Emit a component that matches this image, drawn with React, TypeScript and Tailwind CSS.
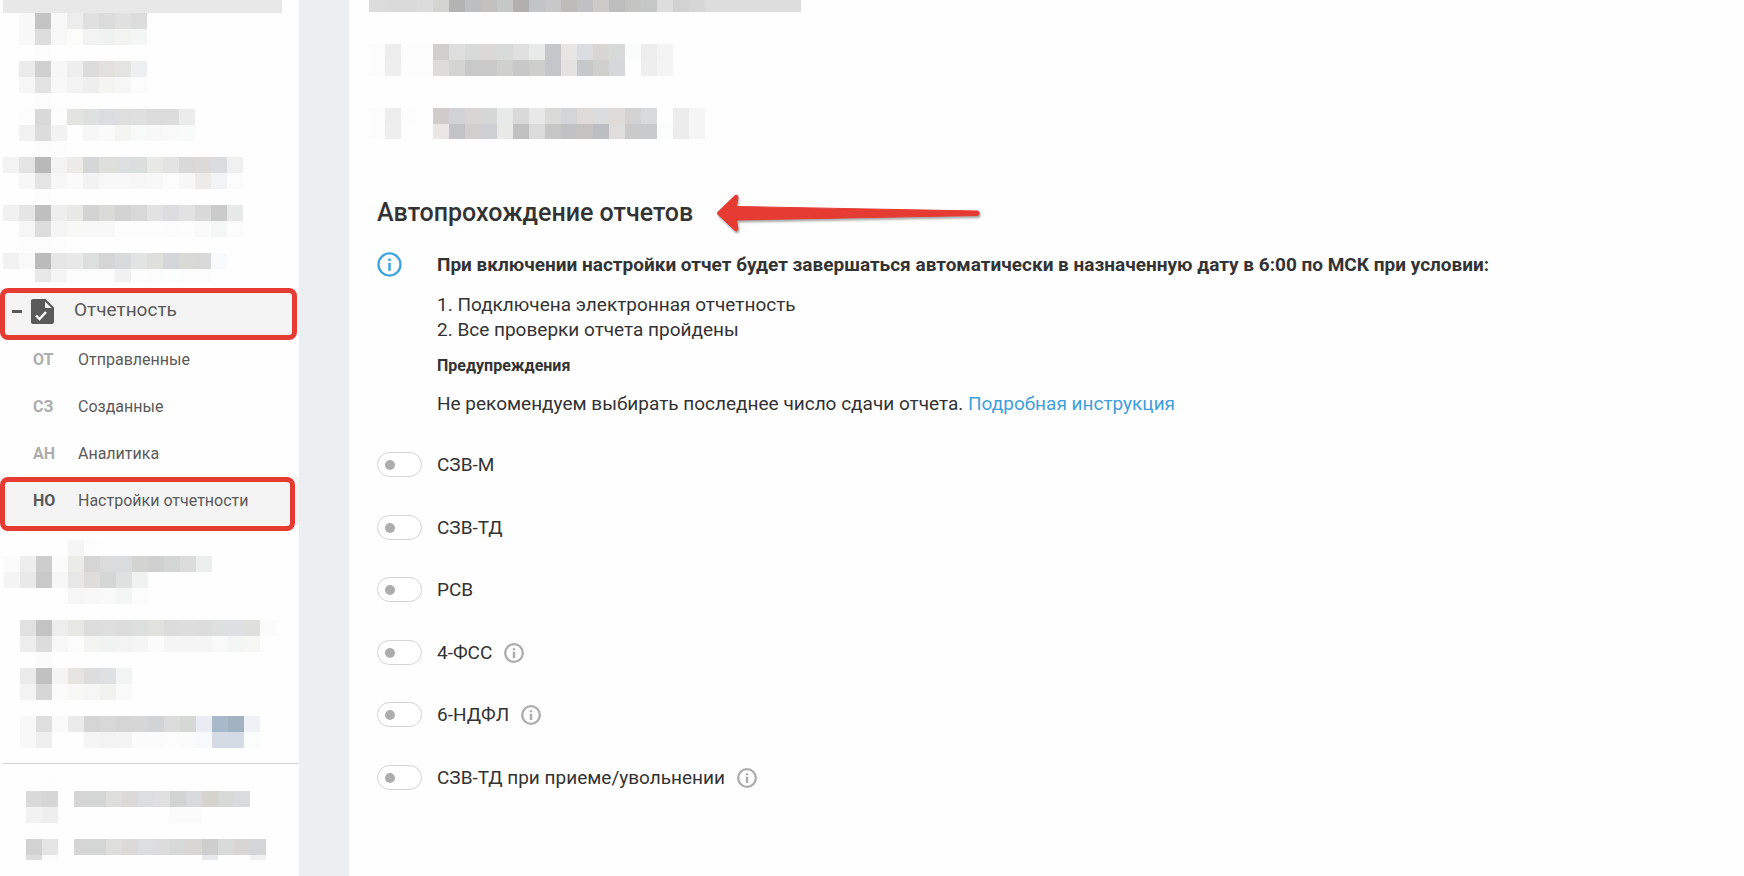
import { useState } from 'react'

// Redacted areas are stored as rows of 16px cells: a two digit grey level, a full hex colour, or "." for nothing
const topMenuRows = [
  '. f8 c4 f8 ed e0 dc e0 dd',
  '. f8 dd f8 fcfcfa f3 eff2f1 f3f3f1 f4f6f6',
  '. . fd',
  '. eb d0 f7 ee dc e2e1de e4e4e3 edeff1',
  '. f6 e3 f8 f3 ee f4f4f1 f6 fc',
  '. . fd',
  '. fd d9 fd e3e3df dfe0e0 dcdde0 de df dc dc ec',
  '. f2 dc f2 fe f7 fa f4f4f2 f8faf9 f8 f9 f9fbfa',
  '. . fc fd',
  'f3 e4 b9 f3 ecebe8 d4d6d8 dfdfdc dcdfe0 dadedd e8e8e5 e3 d9 dcdad9 dadcdf f0',
  'fe f7 e4 f7 fa f2 f8 f8 f7 f8 fc f7 ecebe9 f1f3f5 fc',
  '. . fd',
  'f1 e5 bf ee e8e8e6 d3 dadad8 d3 d8 e2 dddde0 e2 d9 cb e7e9e8',
  'fe f6 dd f5 f8f8f6 f8 f8 fd fd fd fc fd fa f5f7f6 fc',
  '. fc fc fd',
  'f2 f9 bb e6 e8 dcdfde d5 d8dadc e1e4e3 dfdfdc d4d6d9 d9d9d6 d8 f8fafc',
  'fe fe e8 f5 fc fc fc f1 fd fc fcfdfd fc fc fe',
]

const middleMenuRows = [
  '. . . . f5 fd',
  'fb ee cd fb ebebe8 d5 db dadbdd d3d4d1 d0 d3d6d5 dc edefee',
  'f4 e9 c9 f7 e7 dedddb d5d7d6 dfe1e0 f0f2f1',
  '. . . . f6 f8 f9 f4f6f5 fc',
  '.',
  '. e1 c3 ed e7e7e4 dd de dc dcdfde e1e1de dc dd dc dee0e0 dedfe2 dfdfdc fb',
  '. ed dc f8 fc f4f4f2 f1f3f3 f3 f5 fb f5 f5 f5 f9 f4f6f6 f6f6f4 fe',
  '. . fb',
  '. eb c1 f4 e5e4e1 dd dfe0e2 f2f4f4',
  '. f3 d6 fb f8f8f6 f6 f2f2f0 fa',
  '.',
  '. f8 de fa eb d5 d8 d5 d6 d2d3d5 dc d6d8d6 e9edf3 a9b8ca a3b2c1 eef2f6',
  '. f8 ef fe fe f5 f3 f4 fb fb fc fb f7f9fc d5dbe4 d5dbe4 fbfdfc',
]

const bottomMenuRows = [
  '. fd',
  'd9 d6 . d5 d3d6d4 dedfdc dcdad7 dddee1 e0 d1d4d2 d8dadc d4d3ce d8dad8 dadbdf',
  'f2 ee . . . . . . . fb fb',
  'fd',
  'd2 e4 . d5 d3d6d4 dedfdc dcdad7 dddee1 dc d6d9d7 d9d7d4 ce d8dbd9 d7d6d5 d4d5d8',
  'dc fb . . . . . . . . . e7e8ea . . f1',
]

const headerRows = [
  'dc da da dc d4d4d1 b3 bcbec0 c3c0c0 c6c8c7 b1b0ae c2c4c7 c8 bebcb9 c1c1c4 cdcaca bd c4c4c2 c5c7c6 dd d2 d6 dd dd dd dd dd dd',
]

const firstFieldRows = [
  'fc ed fd fd d0cfcd de d8dad9 dbd9d8 d8dbd9 e0 e8eae9 c6c7c9 e8e6e4 dbdde0 d8d6d3 d7d9d8 fafcfc ed f3',
  'fc ee fd fd dddcdb d4d4d2 c9 c9 cfcfce c8 cececd c5c6c9 e5e3e1 c7c8ca d0d0cd d6d7da . ee f4',
]

const secondFieldRows = [
  'fc ed fd fe d1ccc9 d1d2d5 d9d5d4 d5d7d6 e8eae9 d9 e8 dadad8 d4d5d8 dedbd8 dadcde dfdbd9 d3 d9dadc . ec f5',
  'fc ee fe fe ebe6e3 c2c3c6 d3cece cfd0d3 e9e9e7 c1 dc c6 c2c2c4 c4c3c0 bdbec1 dfdedc ca c9cacc fbfdfc ec f5',
]

const subItems = [
  { code: 'ОТ', label: 'Отправленные', active: false },
  { code: 'СЗ', label: 'Созданные', active: false },
  { code: 'АН', label: 'Аналитика', active: false },
  { code: 'НО', label: 'Настройки отчетности', active: true },
]

const reports = [
  { id: 'szv-m', label: 'СЗВ-М', hint: false },
  { id: 'szv-td', label: 'СЗВ-ТД', hint: false },
  { id: 'rsv', label: 'РСВ', hint: false },
  { id: '4-fss', label: '4-ФСС', hint: true },
  { id: '6-ndfl', label: '6-НДФЛ', hint: true },
  { id: 'szv-td-hire', label: 'СЗВ-ТД при приеме/увольнении', hint: true },
]

function cellColor(cell: string) {
  if (cell === '.') return 'transparent'
  return cell.length === 2 ? `#${cell}${cell}${cell}` : `#${cell}`
}

function Mosaic({ rows }: { rows: string[] }) {
  return (
    <div aria-hidden="true">
      {rows.map((row, y) => (
        <div key={y} className="flex h-4">
          {row.split(' ').map((cell, x) => (
            <span key={x} className="h-4 w-4 shrink-0" style={{ backgroundColor: cellColor(cell) }} />
          ))}
        </div>
      ))}
    </div>
  )
}

function InfoIcon({ thin = false }: { thin?: boolean }) {
  return (
    <svg viewBox="0 0 24 24" className="h-full w-full" fill="none" stroke="currentColor" aria-hidden="true">
      <circle cx="12" cy="12" r="10.6" strokeWidth={thin ? 2.2 : 2.8} />
      <path d="M12 10.4v7.600M12 6.200v2.400" strokeWidth={thin ? 2.4 : 3} />
    </svg>
  )
}

function ReportIcon() {
  return (
    <svg viewBox="0 0 23 25" className="h-[25px] w-[23px]" aria-hidden="true">
      <path d="M2 0h12.500l8.500 8.500V23a2 2 0 0 1-2 2H2a2 2 0 0 1-2-2V2a2 2 0 0 1 2-2z" fill="#5a5a5a" />
      <path d="M14 2.500v6.500h6.500z" fill="#f4f4f4" />
      <path d="M5 16.500l3.500 3.500 6.500-7" fill="none" stroke="#fff" strokeWidth="2.400" />
    </svg>
  )
}

function Arrow() {
  return (
    <svg viewBox="0 0 268 44" className="h-11 w-[268px] drop-shadow-[1px_2px_1px_rgba(0,0,0,0.35)]" aria-hidden="true">
      <path
        d="M2.500 21.500L20 4.500q2.500-1.500 3 1.500l-1.500 9.500L263 20q3 2 0 4.500L21.500 29l1.500 9q-.5 3-3 1.500L2.500 23z"
        fill="#e63b32"
        stroke="#e63b32"
        strokeLinejoin="round"
      />
    </svg>
  )
}

function Sidebar() {
  return (
    <aside className="w-[299px] shrink-0 pb-4">
      <div className="ml-[3px] h-[13px] w-[279px] bg-[#e8e8e8]" />
      <div className="ml-[3px] h-[269px] overflow-hidden">
        <Mosaic rows={topMenuRows} />
      </div>

      <nav className="mt-1.5">
        <div className="relative">
          <button type="button" className="flex h-12 w-full items-center bg-[#f4f4f4] pb-0.5 pl-3 text-left">
            <span className="h-[3px] w-2.5 bg-[#5a5a5a]" />
            <span className="ml-[9px]">
              <ReportIcon />
            </span>
            <span className="ml-5 pb-0.5 text-[19px] text-[#5a5a5a]">Отчетность</span>
          </button>
          <div className="pointer-events-none absolute top-0 left-0 h-[52px] w-[297px] rounded-lg border-[5px] border-[#e63b32]" />
        </div>
        <ul className="pb-px">
          {subItems.map((item) => (
            <li key={item.code} className="relative">
              <a
                href="#"
                className={`flex items-center pl-[33px] text-base text-[#5a5a5a] ${item.active ? 'h-12 bg-[#f4f4f4]' : 'h-[47px]'}`}
              >
                <span className={`w-[45px] font-bold ${item.active ? 'text-[#5a5a5a]' : 'text-[#adadad]'}`}>
                  {item.code}
                </span>
                <span>{item.label}</span>
              </a>
              {item.active && (
                <div className="pointer-events-none absolute top-0 left-0 h-[54px] w-[295px] rounded-lg border-[5px] border-[#e63b32]" />
              )}
            </li>
          ))}
        </ul>
      </nav>

      <div className="mt-3.5 ml-1">
        <Mosaic rows={middleMenuRows} />
      </div>
      <hr className="mt-[15px] ml-[3px] border-[#d4d4d4]" />
      <div className="mt-[11px] ml-[26px] h-[85px] overflow-hidden">
        <Mosaic rows={bottomMenuRows} />
      </div>
    </aside>
  )
}

export default function App() {
  const [enabled, setEnabled] = useState<Record<string, boolean>>({})

  function toggle(id: string) {
    setEnabled((prev) => ({ ...prev, [id]: !prev[id] }))
  }

  return (
    <div className="flex h-screen overflow-hidden bg-[#fefefe] font-['Roboto','Liberation_Sans',sans-serif] text-[#333]">
      <Sidebar />
      <div className="w-[50px] shrink-0 bg-[#ebeff2]" />

      <main className="min-w-0 flex-1 pl-5">
        <div className="h-3 overflow-hidden">
          <Mosaic rows={headerRows} />
        </div>
        <div className="mt-8">
          <Mosaic rows={firstFieldRows} />
        </div>
        <div className="mt-8 h-[31px] overflow-hidden">
          <Mosaic rows={secondFieldRows} />
        </div>

        <section className="pl-2">
          <div className="mt-[52px] flex h-11 items-center">
            <h1 className="text-[25px] font-medium">Автопрохождение отчетов</h1>
            <span className="ml-[22px]">
              <Arrow />
            </span>
          </div>

          <div className="mt-[17px] flex">
            <span className="h-[25px] w-[25px] shrink-0 text-[#3ca2e0]">
              <InfoIcon thin />
            </span>
            <div className="ml-[35px] text-[19px] leading-[25px]">
              <p className="font-bold">
                При включении настройки отчет будет завершаться автоматически в назначенную дату в 6:00 по МСК при условии:
              </p>
              <ol className="mt-[15px] list-inside list-decimal">
                <li>Подключена электронная отчетность</li>
                <li>Все проверки отчета пройдены</li>
              </ol>
              <p className="mt-[11px] text-base leading-[25px] font-bold">Предупреждения</p>
              <p className="mt-[13px]">
                Не рекомендуем выбирать последнее число сдачи отчета.{' '}
                <a href="#" className="text-[#419fdc]">
                  Подробная инструкция
                </a>
              </p>
            </div>
          </div>

          <div className="mt-9">
            {reports.map((report) => (
              <div key={report.id} className="flex h-[25px] items-center odd:mb-[38px] even:mb-[37px]">
                <label className="flex cursor-pointer items-center text-[19px] leading-[25px]">
                  <input
                    type="checkbox"
                    role="switch"
                    checked={!!enabled[report.id]}
                    onChange={() => toggle(report.id)}
                    className="h-[25px] w-[45px] appearance-none rounded-full border border-[#d4d4d4] bg-white before:mt-[7px] before:ml-[7px] before:block before:h-2.5 before:w-2.5 before:rounded-full before:bg-[#adadad] checked:border-[#3ca2e0] checked:before:ml-[26px] checked:before:bg-[#3ca2e0]"
                  />
                  <span className="ml-[15px]">{report.label}</span>
                </label>
                {report.hint && (
                  <button type="button" aria-label="Подсказка" className="ml-3 h-5 w-5 text-[#adadad]">
                    <InfoIcon />
                  </button>
                )}
              </div>
            ))}
          </div>
        </section>
      </main>
    </div>
  )
}
